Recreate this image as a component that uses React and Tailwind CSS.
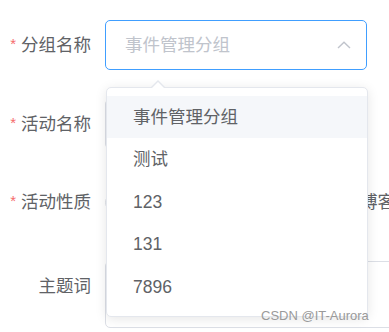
const options = ["事件管理分组", "测试", "123", "131", "7896"];

const Label = ({ required, children, className = "" }) => (
  <div className={`w-[105px] shrink-0 pr-[14px] flex justify-end items-center h-[50px] ${className}`}>
    {required && <span className="text-[#f56c6c] mr-[5px] text-[15px] leading-none -mt-[4px]">*</span>}
    <span>{children}</span>
  </div>
);

export default function App() {
  return (
    <div
      className="relative w-[389px] h-[332px] overflow-hidden bg-white text-[#606266] text-[17.5px]"
      style={{ fontFamily: '"Liberation Sans", "Noto Sans CJK SC", sans-serif' }}
    >
      <div className="pt-[20px] flex flex-col">
        {/* 分组名称 */}
        <div className="flex h-[50px]">
          <Label required>分组名称</Label>
          <div className="w-[262px] h-[50px] border border-[#409eff] rounded-[5px] flex items-center pl-[19px] pr-[14px]">
            <span className="flex-1 text-[#c0c4cc]">事件管理分组</span>
            <svg width="14" height="8" viewBox="0 0 14 8" fill="none" className="mr-[1px]">
              <path d="M1 7L7 1.2L13 7" stroke="#c0c4cc" strokeWidth="1.4" />
            </svg>
          </div>
        </div>

        {/* 活动名称 */}
        <div className="flex h-[50px] mt-[29px]">
          <Label required>活动名称</Label>
          <div className="w-[262px] h-[50px] border border-[#dcdfe6] rounded-[5px]"></div>
        </div>

        {/* 活动性质 */}
        <div className="flex h-[50px] mt-[28px]">
          <Label required>活动性质</Label>
          <div className="flex items-center whitespace-nowrap">
            <span className="w-[17px] h-[17px] rounded-full border border-[#dcdfe6]"></span>
            <span className="w-[209px]"></span>
            <span className="w-[17px] h-[17px] rounded-full border border-[#dcdfe6]"></span>
            <span className="ml-[12px]">博客</span>
          </div>
        </div>

        {/* 主题词 */}
        <div className="flex mt-[34px]">
          <Label className="items-center">主题词</Label>
          <div className="w-[300px] shrink-0 h-[67px] border border-[#dcdfe6] rounded-[5px]"></div>
        </div>
      </div>

      {/* dropdown */}
      <div className="absolute left-[106px] top-[87px] w-[262px] bg-white border border-[#e4e7ed] rounded-[5px] shadow-[0_2px_12px_0_rgba(0,0,0,0.1)] py-[7.5px]">
        <div className="absolute -top-[8px] left-[44px] w-0 h-0 border-x-[7.5px] border-b-[7.5px] border-x-transparent border-b-[#e4e7ed]"></div>
        <div className="absolute -top-[6.5px] left-[45px] w-0 h-0 border-x-[6.5px] border-b-[6.5px] border-x-transparent border-b-white"></div>
        {options.map((o, i) => (
          <div
            key={o}
            className={`h-[42.5px] flex items-center pl-[26px] ${i === 0 ? "bg-[#f5f7fa]" : ""}`}
          >
            {o}
          </div>
        ))}
      </div>

      {/* watermark */}
      <div className="absolute left-[261px] top-[308px] text-[13px] leading-[16px] text-[#9a9a9a]">
        CSDN @IT-Aurora
      </div>
    </div>
  );
}
